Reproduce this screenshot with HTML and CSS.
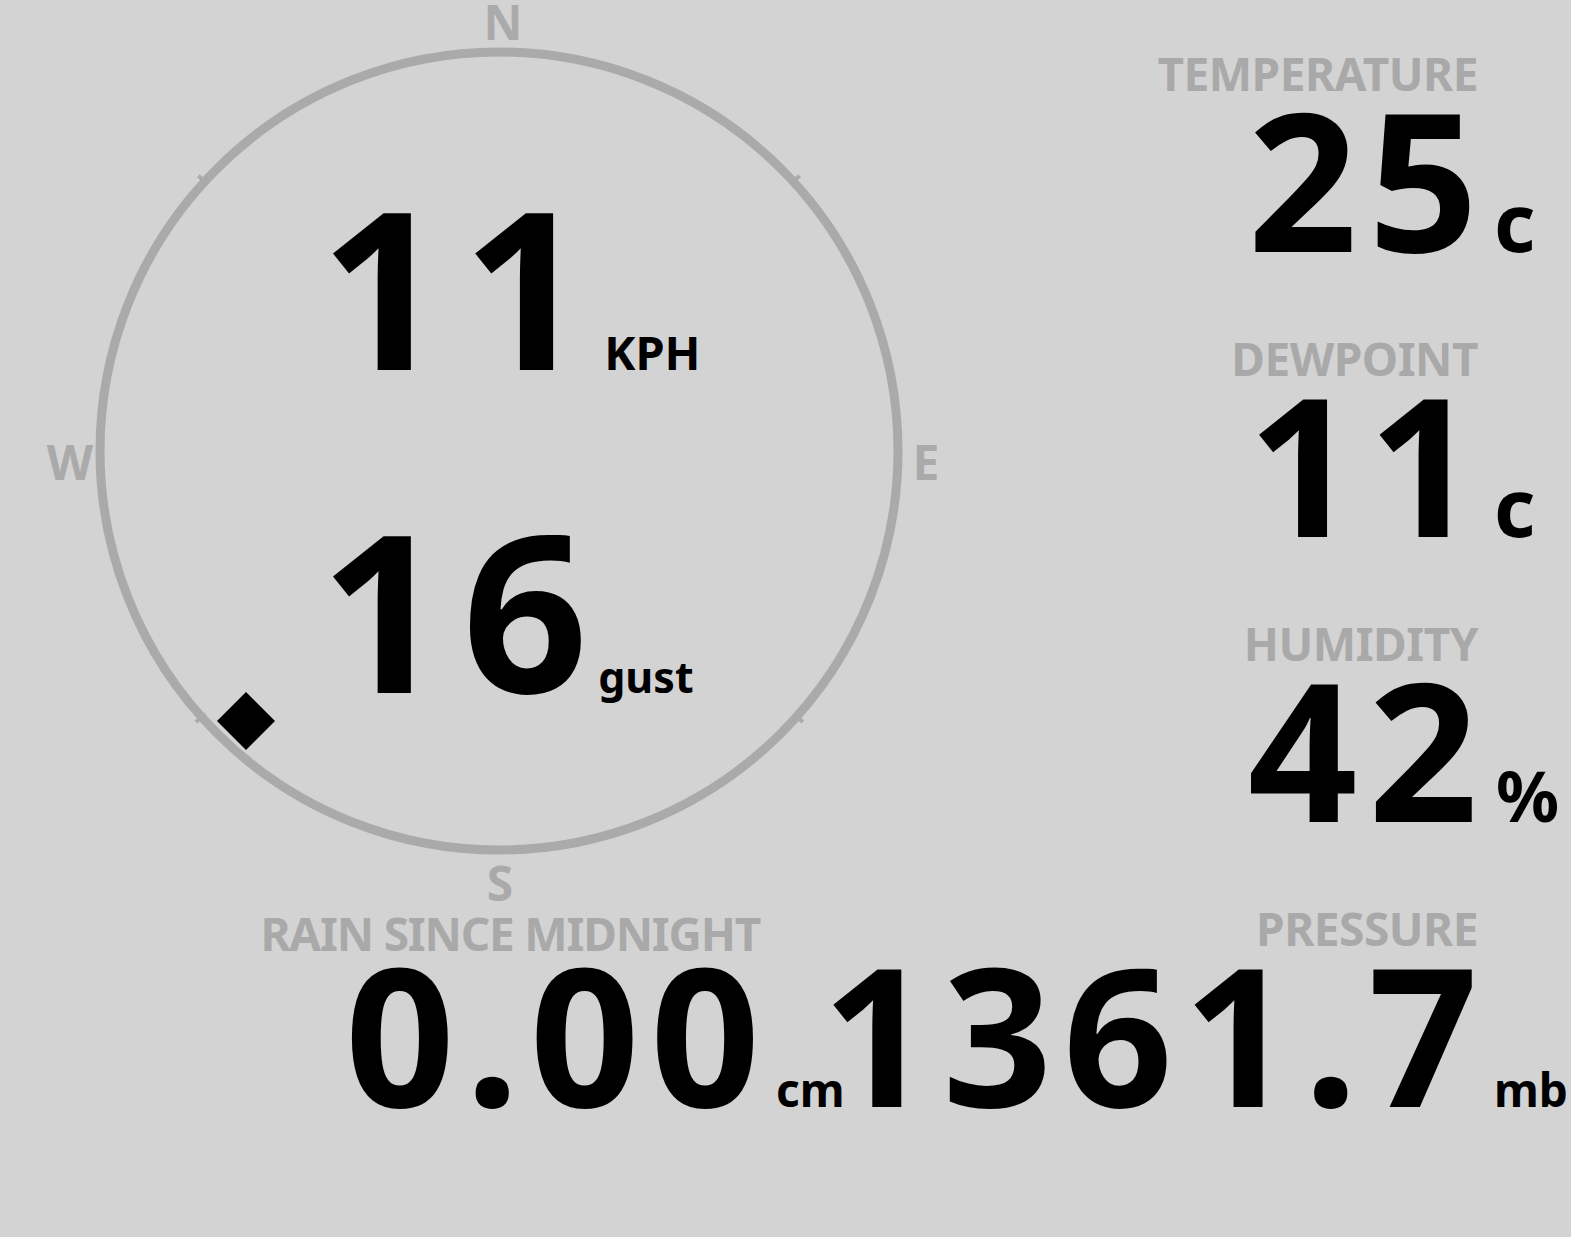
FILE: index.html
```html
<!DOCTYPE html>
<html lang="en">
<head>
  <meta charset="UTF-8" />
  <meta name="viewport" content="width=device-width, initial-scale=1.0"/>
  <title>Weather Station</title>
  <link rel="stylesheet" href="styles.css">
</head>
<body>
  <div class="station">
    <div class="top">
      <!-- wind dial -->
      <div class="compass">
        <svg class="compass-dial" width="1000" height="905" viewBox="0 0 1000 905">
          <circle cx="499" cy="451" r="399" fill="none" stroke="#aaaaaa" stroke-width="9"/>
          <g stroke="#aaaaaa" stroke-width="4">
            <line x1="207.7" y1="184" x2="198.4" y2="175.8"/>
            <line x1="790.3" y1="184" x2="799.6" y2="175.8"/>
            <line x1="793.4" y1="714" x2="802.9" y2="722"/>
            <line x1="205.4" y1="714" x2="195.9" y2="722"/>
          </g>
          <g class="compass-points" text-anchor="middle">
            <text x="503" y="40">N</text>
            <text x="926" y="480">E</text>
            <text x="500" y="901">S</text>
            <text x="70" y="480">W</text>
          </g>
          <rect x="225.5" y="700.5" width="41" height="41" fill="#000" transform="rotate(45 246 721)"/>
        </svg>
        <div class="wind">
          <div class="wind-row">
            <span class="wind-speed">11</span>
            <span class="wind-unit">KPH</span>
          </div>
          <div class="wind-row">
            <span class="wind-speed">16</span>
            <span class="wind-unit wind-unit--gust">gust</span>
          </div>
        </div>
      </div>

      <div class="readings">
        <div class="stat">
          <div class="stat-label">TEMPERATURE</div>
          <div class="stat-row">
            <span class="stat-value">25</span>
            <span class="stat-unit stat-unit--big">c</span>
          </div>
        </div>
        <div class="stat">
          <div class="stat-label">DEWPOINT</div>
          <div class="stat-row">
            <span class="stat-value">11</span>
            <span class="stat-unit stat-unit--big">c</span>
          </div>
        </div>
        <div class="stat">
          <div class="stat-label">HUMIDITY</div>
          <div class="stat-row">
            <span class="stat-value">42</span>
            <span class="stat-unit stat-unit--pct">%</span>
          </div>
        </div>
      </div>
    </div>

    <div class="bottom">
      <div class="stat stat--rain">
        <div class="stat-label">RAIN SINCE MIDNIGHT</div>
        <div class="stat-row">
          <span class="stat-value">0.00</span>
          <span class="stat-unit">cm</span>
        </div>
      </div>
      <div class="stat stat--pressure">
        <div class="stat-label">PRESSURE</div>
        <div class="stat-row">
          <span class="stat-value">1361.7</span>
          <span class="stat-unit">mb</span>
        </div>
      </div>
    </div>
  </div>
</body>
</html>
```

FILE: styles.css
```css
* {
  box-sizing: border-box;
}

body {
  margin: 0;
  padding: 0;
  background: #d3d3d3;
  color: #000;
  font-family: "Noto Sans", "DejaVu Sans", sans-serif;
  font-weight: 700;
  overflow: hidden;
}

.station {
  width: 1571px;
  height: 1237px;
}

.top {
  display: flex;
  height: 905px;
}

/* compass */

.compass {
  position: relative;
  width: 1000px;
  height: 905px;
  flex-shrink: 0;
}

.compass-dial {
  position: absolute;
  top: 0;
  left: 0;
  overflow: visible;
}

.compass-points {
  fill: #aaaaaa;
  font-family: "Noto Sans", sans-serif;
  font-weight: 700;
  font-size: 48px;
}

.wind {
  position: relative;
  padding: 123px 0 0 320px;
}

.wind-row {
  display: flex;
  align-items: baseline;
  height: 323px;
  line-height: 323px;
}

.wind-speed {
  font-size: 220px;
  letter-spacing: 0.075em;
  margin-right: -0.075em;
}

.wind-unit {
  font-size: 47px;
  margin-left: 16px;
}

.wind-unit--gust {
  font-size: 43px;
  margin-left: 10px;
}

/* readings */

.readings {
  flex: 1;
  display: flex;
  flex-direction: column;
  gap: 76px;
  padding-top: 50px;
}

.stat {
  display: flex;
  flex-direction: column;
  align-items: flex-end;
}

.stat-label {
  color: #a9a9a9;
  font-size: 46px;
  line-height: 46px;
  letter-spacing: -0.5px;
  margin-right: 93px;
  white-space: nowrap;
}

.stat-row {
  display: flex;
  align-items: baseline;
}

.stat-value {
  font-size: 192px;
  line-height: 163px;
  letter-spacing: 0.055em;
  margin-right: -0.055em;
  white-space: nowrap;
}

.stat-unit {
  width: 93px;
  padding-left: 16px;
  font-size: 46px;
  line-height: 46px;
}

.stat-unit--big {
  font-size: 80px;
}

.stat-unit--pct {
  font-size: 70px;
  padding-left: 18px;
}

/* bottom row */

.bottom {
  display: flex;
}

.stat--rain {
  flex: none;
  width: 834px;
  margin-right: -120px;
}

.stat--rain .stat-label {
  letter-spacing: -1.2px;
  margin-right: 74px;
  padding-top: 5px;
  margin-bottom: -5px;
}

.stat--rain .stat-unit {
  width: 74px;
}

.stat--pressure {
  flex: none;
  margin-left: auto;
}
```
